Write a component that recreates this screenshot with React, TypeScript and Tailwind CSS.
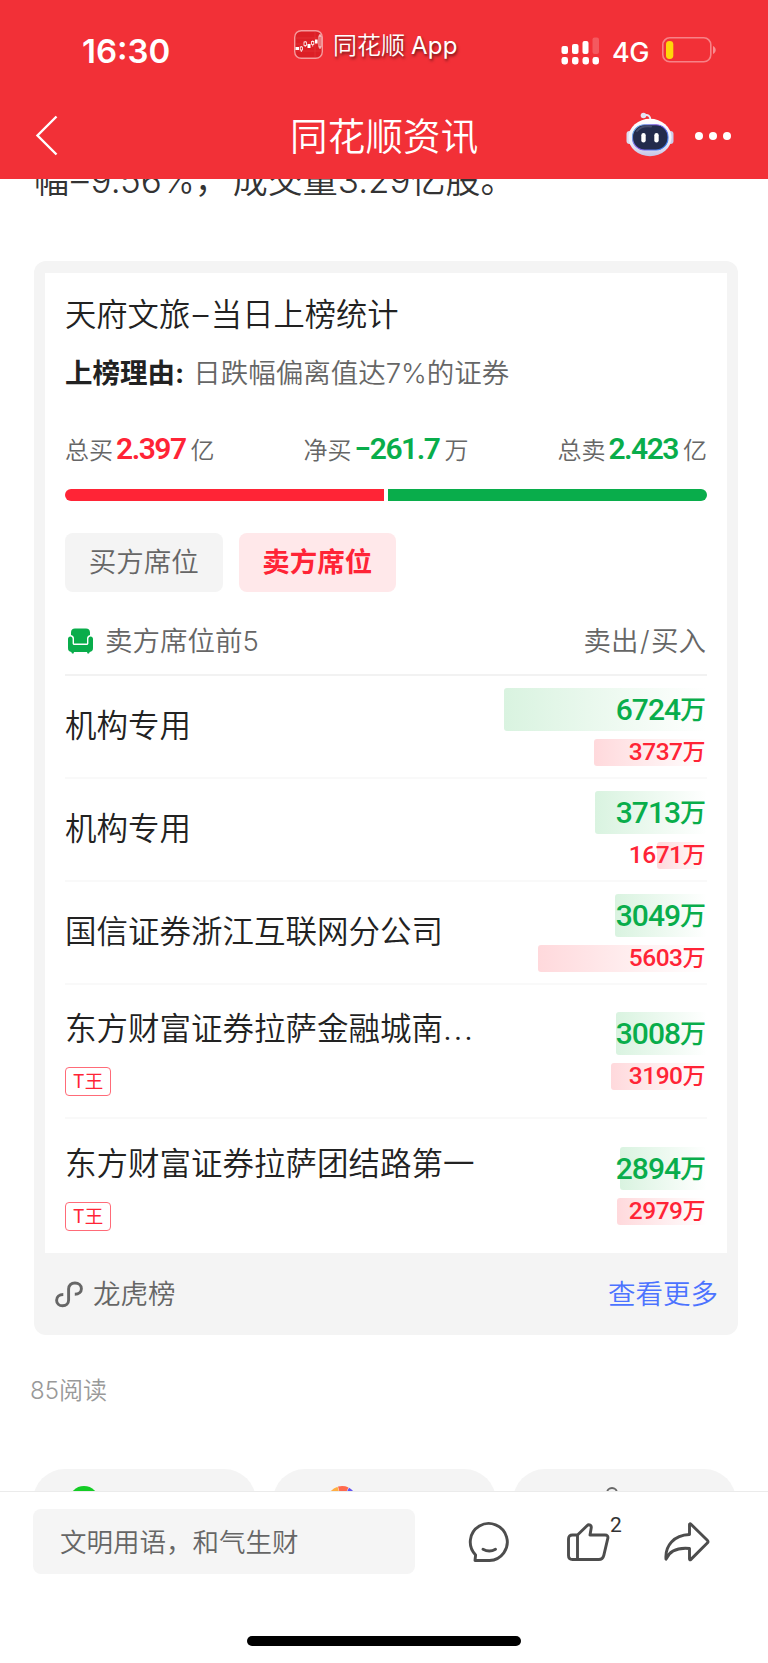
import clsx from 'clsx';

interface Seat {
  id: number;
  name: string;
  sell: number;
  buy: number;
  tag?: string;
}

const seats: Seat[] = [
  { id: 1, name: '机构专用', sell: 6724, buy: 3737 },
  { id: 2, name: '机构专用', sell: 3713, buy: 1671 },
  { id: 3, name: '国信证券浙江互联网分公司', sell: 3049, buy: 5603 },
  { id: 4, name: '东方财富证券拉萨金融城南...', sell: 3008, buy: 3190, tag: 'T王' },
  { id: 5, name: '东方财富证券拉萨团结路第一', sell: 2894, buy: 2979, tag: 'T王' },
];

const maxAmount = Math.max(...seats.flatMap((s) => [s.sell, s.buy]));
const barWidth = (amount: number) => `${(amount / maxAmount) * 100}%`;

const SignalIcon = () => (
  <svg width="39" height="28" viewBox="0 0 39 28" fill="#fff">
    <rect x="0.5" y="9" width="6.5" height="8" rx="2" />
    <rect x="11" y="7" width="6.5" height="10" rx="2" />
    <rect x="21.5" y="4" width="6" height="13" rx="2" />
    <rect x="31.5" y="0.5" width="6.5" height="16.5" rx="2" opacity="0.2" />
    <rect x="0.5" y="20" width="6.5" height="7.5" rx="2.4" />
    <rect x="11" y="20" width="6.5" height="7.5" rx="2.4" />
    <rect x="21.5" y="20" width="6.5" height="7.5" rx="2.4" />
    <rect x="31.5" y="20" width="6.5" height="7.5" rx="2.4" />
  </svg>
);

const BatteryIcon = () => (
  <svg width="55" height="26" viewBox="0 0 55 26" fill="none">
    <rect x="0.8" y="0.8" width="48" height="24" rx="7" stroke="#fff" strokeOpacity="0.4" strokeWidth="1.6" />
    <rect x="4" y="4" width="7.3" height="18" rx="3.4" fill="#ffd60a" />
    <path d="M51 9c3.6 1.4 3.6 6.6 0 8z" fill="#fff" fillOpacity="0.45" />
  </svg>
);

const AppIcon = () => (
  <svg width="29" height="29" viewBox="0 0 29 29" fill="none">
    <rect x="0.7" y="0.7" width="27.6" height="27.6" rx="6.5" fill="#dc1f26" stroke="#f59a9c" strokeWidth="1.4" />
    <path d="M2 8h25M2 14h25M2 21h25M21 2v25" stroke="#e63a3e" strokeWidth="0.6" />
    <path d="M7.3 16v6M11.2 11v6M18.7 10.5v6M26 4v15" stroke="#fff" strokeWidth="0.8" />
    <g fill="#fff">
      <rect x="1.5" y="17" width="3.5" height="3" />
      <rect x="13.5" y="14" width="3" height="4" />
      <rect x="21" y="9.5" width="2.6" height="4" />
    </g>
    <g fill="#dc1f26" stroke="#fff" strokeWidth="0.8">
      <rect x="6.2" y="17" width="2.2" height="3" />
      <rect x="10" y="12" width="2.4" height="3.5" />
      <rect x="17.6" y="11.5" width="2.2" height="3" />
      <rect x="25" y="6" width="2" height="11" />
    </g>
  </svg>
);

const RobotIcon = () => (
  <svg width="48" height="45" viewBox="0 0 48 45" fill="none">
    <defs>
      <linearGradient id="shell" x1="0" y1="0" x2="0" y2="1">
        <stop offset="0" stopColor="#ffffff" />
        <stop offset="0.65" stopColor="#ececf8" />
        <stop offset="1" stopColor="#c4c3e6" />
      </linearGradient>
      <linearGradient id="rim" x1="0" y1="0" x2="1" y2="0.6">
        <stop offset="0" stopColor="#57c4e8" />
        <stop offset="0.5" stopColor="#8a5be8" />
        <stop offset="1" stopColor="#3f7df0" />
      </linearGradient>
    </defs>
    <path d="M18 3.5c4-1.5 6.5.5 6.5 5" stroke="#e9e9f6" strokeWidth="2" />
    <circle cx="17.5" cy="3.5" r="2.8" fill="#e4e4f4" />
    <rect x="0.5" y="19" width="6" height="13" rx="3" fill="#dcdcf0" />
    <rect x="41.5" y="19" width="6" height="13" rx="3" fill="#cccce8" />
    <ellipse cx="24" cy="25.5" rx="21.5" ry="18.8" fill="url(#shell)" />
    <rect x="6.5" y="12.8" width="35.5" height="25.2" rx="12" fill="#232b4c" stroke="url(#rim)" strokeWidth="1.1" />
    <path d="M11 19c3-4 9-5 14-4.5" stroke="#444c6e" strokeWidth="2" strokeLinecap="round" />
    <rect x="15.3" y="21" width="4.4" height="9.5" rx="2.2" fill="#fff" />
    <rect x="28.3" y="21" width="4.4" height="9.5" rx="2.2" fill="#fff" />
  </svg>
);

const SofaIcon = () => (
  <svg width="25" height="26" viewBox="0 0 25 26" fill="#09ad4b">
    <path d="M3 7V4.500C3 2 4.500.5 7 .5h11c2.500 0 4 1.500 4 4V7c-2 .5-3 1.700-3 3.500v5H6v-5C6 8.700 5 7.500 3 7z" />
    <path d="M0 11c0-1.600 1-2.500 2.300-2.500S4.600 9.400 4.600 11v4.200c0 1.200.6 1.800 1.800 1.800h12.200c1.200 0 1.800-.6 1.800-1.800V11c0-1.600 1-2.500 2.300-2.500S25 9.400 25 11v9c0 2.500-1 3.700-3.300 4l-.7 1.500h-1.500L19 24H6l-.5 1.500H4L3.300 24C1 23.700 0 22.500 0 20z" />
  </svg>
);

const LinkIcon = () => (
  <svg width="28" height="27" viewBox="0 0 28 27" fill="none" stroke="#666" strokeWidth="2.9">
    <path d="M8.300 13.500C4.200 13.500 1.600 15.800 1.600 19.200c0 3.300 2.500 5.600 6 5.600s6-2.300 6-5.800V8c0-3.600 2.600-6 6.300-6 3.800 0 6.500 2.400 6.500 5.700 0 3.200-2.500 5.500-6.600 5.500" />
  </svg>
);

const CommentIcon = () => (
  <svg width="42" height="42" viewBox="0 0 42 42" fill="none" stroke="#4d4d4d" strokeWidth="2.9" strokeLinecap="round" strokeLinejoin="round">
    <path d="M7 39.500l.6-5.500A18.500 18.500 0 1 1 21.500 39.500z" />
    <path d="M15 28.300c4 2.200 8.700 2.200 12.500 0" />
  </svg>
);

const LikeIcon = () => (
  <svg width="43" height="40" viewBox="0 0 43 40" fill="none" stroke="#4d4d4d" strokeWidth="2.9" strokeLinejoin="round">
    <path d="M10.500 13L20 3.700c2-2 4.800-.3 4.200 2.200L23 13h15c2.200 0 3.300 1.300 2.800 3.400l-4 17c-.7 2.800-2.300 4.100-5 4.100H5.500c-2.600 0-4-1.300-4-4V17c0-2.700 1.300-4 4-4z" />
    <path d="M10.500 13v24.500" />
  </svg>
);

const ShareIcon = () => (
  <svg width="46" height="40" viewBox="0 0 46 40" fill="none" stroke="#4d4d4d" strokeWidth="2.9" strokeLinejoin="round">
    <path d="M25.500 12.500V2.500c0-.7.700-1 1.200-.5L43.300 18.300c1 1 1 1.700 0 2.700L26.700 37.600c-.5.5-1.200.2-1.200-.5V26.500C14.500 25.500 5.500 28.800 2 37.200 .8 23.700 10 13 25.500 12.500z" />
  </svg>
);

function Header() {
  return (
    <header className="relative z-10 h-[179px] bg-[#f23037] text-white">
      <div className="flex h-[90px] items-start">
        <div className="ml-[82px] mt-[31px] w-[212px] text-[33px] font-semibold leading-[40px]">16:30</div>
        <div className="mt-[30px] flex items-start">
          <AppIcon />
          <span className="ml-[10px] text-[24px] leading-[31px] [text-shadow:1px_2px_3px_rgba(0,0,0,0.55)]">
            同花顺<span className="ml-[6px] font-normal tracking-[0.2px]">App</span>
          </span>
        </div>
        <div className="ml-auto mr-[51px] mt-[37px] flex items-start">
          <SignalIcon />
          <span className="ml-[12px] w-[50px] text-[27px] font-medium leading-[31px] tracking-[-0.5px]">4G</span>
          <BatteryIcon />
        </div>
      </div>
      <div className="flex h-[89px] items-start">
        <svg className="ml-[35px] mt-[25px]" width="24" height="41" viewBox="0 0 24 41" fill="none" stroke="#fff" strokeWidth="2.4">
          <path d="M21.5 1.5L2.5 20.5l19 19" />
        </svg>
        <h1 className="ml-[231px] mt-[22px] w-[336px] text-[37.5px] leading-[50px] tracking-[0.2px]">同花顺资讯</h1>
        <div className="mt-[22px]">
          <RobotIcon />
        </div>
        <div className="ml-[21px] mt-[42px] flex gap-[6px]">
          <i className="size-2 rounded-full bg-white" />
          <i className="size-2 rounded-full bg-white" />
          <i className="size-2 rounded-full bg-white" />
        </div>
      </div>
    </header>
  );
}

interface StatProps {
  label: string;
  value: string;
  unit: string;
  color: string;
}

function Stat({ label, value, unit, color }: StatProps) {
  return (
    <div className="flex h-[36px] items-baseline text-[24px] leading-[36px] text-[#666]">
      {label}
      <span className={clsx('ml-[3px] mr-[5px] font-[Roboto] text-[30px] font-semibold tracking-[-1.5px]', color)}>{value}</span>
      {unit}
    </div>
  );
}

function SeatRow({ seat, last }: { seat: Seat; last: boolean }) {
  return (
    <li
      className={clsx(
        'flex items-center justify-between',
        seat.tag ? 'h-[134px]' : 'h-[103px]',
        !last && 'border-b-2 border-[#f9f9f9]',
      )}
    >
      <div className={clsx(seat.tag ? 'h-[102px] pt-[4px]' : 'pb-[2px]')}>
        <p className="text-[31.5px] leading-[50px]">
          {seat.name.replace('...', '')}
          {seat.name.endsWith('...') && <span className="tracking-[1.6px]">...</span>}
        </p>
        {seat.tag && (
          <span className="mt-[13px] flex h-[29px] w-[46px] justify-center rounded-[4px] border border-[#ff6b78] text-[18.5px] font-normal leading-[26px] text-[#ff2436]">
            {seat.tag}
          </span>
        )}
      </div>
      <div className="flex w-[203px] flex-col items-end gap-2 font-[Roboto,'Noto_Sans_CJK_SC'] font-medium">
        <div
          className="flex h-[43px] items-center justify-end whitespace-nowrap rounded-[3px] bg-linear-to-r from-[#d9f3e0] to-white pt-px text-[30px] leading-none tracking-[-1px] text-[#09ad4b]"
          style={{ width: barWidth(seat.sell) }}
        >
          {seat.sell}
          <span className="mr-[2px] text-[26px]">万</span>
        </div>
        <div
          className="flex h-[27px] items-center justify-end whitespace-nowrap rounded-[3px] bg-linear-to-r from-[#ffd9dc] to-white text-[24.5px] leading-none tracking-[-0.5px] text-[#ff2436]"
          style={{ width: barWidth(seat.buy) }}
        >
          {seat.buy}
          <span className="mr-[2px] text-[23px]">万</span>
        </div>
      </div>
    </li>
  );
}

function RankCard() {
  return (
    <section className="ml-[34px] mt-[82px] h-[1074px] w-[704px] rounded-xl bg-[#f4f4f4] px-[11px] pt-[12px]">
      <div className="h-[980px] bg-white px-5 pt-[17px]">
        <h2 className="text-[31.3px] leading-[50px]">
          天府文旅<span className="mx-[2.5px]">–</span>当日上榜统计
        </h2>
        <p className="mt-[14px] text-[27.5px] leading-[38px] text-[#666]">
          <b className="mr-[9px] text-[#222]">上榜理由:</b>日跌幅偏离值达7%的证券
        </p>

        {/* Totals */}
        <div className="mt-[39px] flex justify-between">
          <Stat label="总买" value="2.397" unit="亿" color="text-[#ff2436]" />
          <Stat label="净买" value="−261.7" unit="万" color="text-[#09ad4b]" />
          <Stat label="总卖" value="2.423" unit="亿" color="text-[#09ad4b]" />
        </div>
        <div className="mt-[22px] flex h-3 gap-1">
          <div className="flex-1 rounded-l-full bg-[#ff2436]" />
          <div className="flex-1 rounded-r-full bg-[#09ad4b]" />
        </div>

        {/* Tabs */}
        <div className="mt-8 flex gap-4 text-[27.5px]">
          <button className="h-[59px] w-[157.5px] rounded-lg bg-[#f4f4f4] text-[#666]">买方席位</button>
          <button className="h-[59px] w-[157.5px] rounded-lg bg-[#ffe8ea] font-bold text-[#ff2436]">卖方席位</button>
        </div>

        <div className="mt-[28px] flex h-[56px] items-start border-b-2 border-[#f2f2f2] pl-[3px] text-[27.5px] leading-[42px] text-[#666]">
          <div className="mt-[8px]">
            <SofaIcon />
          </div>
          <span className="ml-[12px]">卖方席位前5</span>
          <span className="ml-auto mr-px">
            卖出<span className="mx-[1.5px]">/</span>买入
          </span>
        </div>

        <ul>
          {seats.map((seat, idx) => (
            <SeatRow key={seat.id} seat={seat} last={idx === seats.length - 1} />
          ))}
        </ul>
      </div>

      {/* Footer */}
      <div className="flex h-[82px] items-center pl-[10px] pr-[9px] text-[27.5px] text-[#666]">
        <LinkIcon />
        <span className="ml-[10px] pt-[2px]">龙虎榜</span>
        <a className="ml-auto pt-[2px] text-[#4c73ff]">查看更多</a>
      </div>
    </section>
  );
}

function BottomBar() {
  return (
    <footer className="relative z-10 h-[172px] border-t border-[#ebebeb] bg-white">
      <div className="flex h-[83px] items-start pl-[33px] pt-[17px]">
        <div className="h-[65px] w-[382px] rounded-lg bg-[#f5f5f5] pl-[27px] text-[26.5px] leading-[66px] text-[#666]">
          文明用语，和气生财
        </div>
        <div className="ml-[53px] mt-[12px]">
          <CommentIcon />
        </div>
        <div className="relative ml-[57px] mt-[13px]">
          <LikeIcon />
          <span className="absolute -top-[11px] left-[43px] font-[Roboto] text-[21px] font-normal leading-[28px] text-[#333]">2</span>
        </div>
        <div className="ml-[54px] mt-[13px]">
          <ShareIcon />
        </div>
      </div>
      <div className="mx-auto mt-[61px] h-[10px] w-[274px] rounded-full bg-black" />
    </footer>
  );
}

export default function App() {
  return (
    <div className="flex h-[1663px] w-[768px] flex-col overflow-hidden bg-white font-[Inter,'Noto_Sans_CJK_SC',sans-serif] font-[350] text-[#222]">
      <Header />
      <main className="h-[1312px] overflow-hidden">
        <p className="-mt-[21px] h-[21px] whitespace-nowrap pl-[34px] text-[35px] leading-[44px] text-[#333]">
          幅<span className="mx-[2px]">–</span>9.56%<span className="mr-[3px]">，</span>成交量3.29亿股。
        </p>
        <RankCard />
        <p className="ml-[30px] mt-[38px] text-[24px] leading-[36px] text-[#999]">85阅读</p>

        {/* Share buttons, cut off by the bottom bar */}
        <div className="ml-[32.5px] mt-[60px] flex h-[64px] gap-[17px]">
          <div className="w-[223px] rounded-full bg-[#f4f4f4] pl-[36px] pt-[17px]">
            <div className="size-[30px] rounded-full bg-[#14cc25]" />
          </div>
          <div className="w-[223px] rounded-full bg-[#f4f4f4] pl-[54px] pt-[17px]">
            <svg width="30" height="30" viewBox="0 0 30 30">
              <path d="M15 15L3 6A15 15 0 0 1 10.5.8z" fill="#ffae42" />
              <path d="M15 15L11 .6A15 15 0 0 1 21.5 1.5z" fill="#ff6a4d" />
              <path d="M15 15L22 1.8A15 15 0 0 1 29 10z" fill="#6655f0" />
            </svg>
          </div>
          <div className="w-[223px] rounded-full bg-[#f4f4f4] pl-[93px] pt-[18px]">
            <svg width="12" height="12" viewBox="0 0 12 12" fill="none" stroke="#666" strokeWidth="1.8">
              <circle cx="6" cy="6" r="5" />
            </svg>
          </div>
        </div>
      </main>
      <BottomBar />
    </div>
  );
}
